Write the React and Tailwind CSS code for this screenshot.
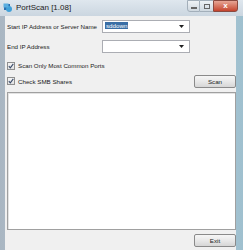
import React from "react";

const Combo = ({ value }) => (
  <div className="flex h-[13px] w-[88px] items-center border border-[#abadb3] bg-white pl-[2px] pr-[5px]">
    <div className="flex-1 leading-none">
      {value && <span className="bg-[#3a6ea5] px-[1px] text-white">{value}</span>}
    </div>
    <svg width="5" height="3" viewBox="0 0 5 3">
      <path d="M0 0h5L2.5 3z" fill="#222" />
    </svg>
  </div>
);

const Check = ({ label }) => (
  <div className="flex items-center gap-[3px]">
    <div className="flex h-[8px] w-[8px] items-center justify-center border border-[#8f8f8f] bg-gradient-to-b from-[#f4f4f4] to-[#e2e2e2]">
      <svg width="6" height="6" viewBox="0 0 6 6">
        <path d="M0.8 3.2 L2.3 4.8 L5.3 0.8" stroke="#3a4b6a" strokeWidth="1.1" fill="none" />
      </svg>
    </div>
    <span>{label}</span>
  </div>
);

const Btn = ({ label }) => (
  <div className="flex h-[13px] w-[42px] items-center justify-center rounded-[2px] border border-[#8a8a8a] bg-gradient-to-b from-[#f6f6f6] via-[#e8e8e8] to-[#d6d6d6] text-[#222]">
    {label}
  </div>
);

export default function App() {
  return (
    <div
      className="flex h-[250px] w-[243px] flex-col overflow-hidden bg-gradient-to-r from-[#a9b6c2] via-[#c9d5df] to-[#9fc0cf] text-[6.2px] text-[#1a1a1a]"
      style={{ fontFamily: '"Liberation Sans", Arial, sans-serif' }}
    >
      <div className="flex h-[16px] items-center bg-gradient-to-b from-[#dfe7ee] to-[#cbd6e0] pl-[3px]">
        <svg width="10" height="10" viewBox="0 0 10 10">
          <rect x="1" y="1" width="6" height="6" fill="#2a6fb0" />
          <circle cx="6" cy="6" r="3" fill="#3fa0d8" />
          <rect x="0.5" y="0.5" width="5" height="4" fill="#5aaee0" />
        </svg>
        <span className="ml-[3px] text-[8px] text-[#222]">PortScan [1.08]</span>
        <div className="ml-auto mr-[5px] flex h-[12px] self-start">
          <div className="flex w-[13px] items-center justify-center rounded-bl-[3px] border border-[#a3afba] bg-gradient-to-b from-[#eef2f5] to-[#cfd8e0]">
            <div className="mt-[3px] h-[2px] w-[6px] border border-[#666] bg-white" />
          </div>
          <div className="flex w-[13px] items-center justify-center border-y border-[#a3afba] bg-gradient-to-b from-[#eef2f5] to-[#cfd8e0]">
            <div className="h-[5px] w-[6px] border border-[#666]" />
          </div>
          <div className="flex w-[25px] items-center justify-center rounded-br-[3px] border border-[#8a4a40] bg-gradient-to-b from-[#e6a595] to-[#c4422c] text-[8px] font-bold text-white">
            x
          </div>
        </div>
      </div>
      <div className="ml-[5px] mr-[7px] flex flex-1 flex-col bg-[#f0f0f0] pl-[2px]">
        <div className="mt-[4px] flex h-[13px] items-center">
          <span className="w-[95px] whitespace-nowrap">Start IP Address or Server Name</span>
          <Combo value="sddown" />
        </div>
        <div className="mt-[7px] flex h-[13px] items-center">
          <span className="w-[95px]">End IP Address</span>
          <Combo />
        </div>
        <div className="mt-[8px] flex h-[10px] items-center">
          <Check label="Scan Only Most Common Ports" />
        </div>
        <div className="mt-[4px] flex h-[13px] items-center justify-between">
          <Check label="Check SMB Shares" />
          <Btn label="Scan" />
        </div>
        <div className="mt-[4px] h-[138px] border border-[#a0a0a0] bg-white shadow-[inset_1px_1px_0_#e3e3e3]" />
        <div className="mt-[4px] flex justify-end">
          <Btn label="Exit" />
        </div>
      </div>
    </div>
  );
}
